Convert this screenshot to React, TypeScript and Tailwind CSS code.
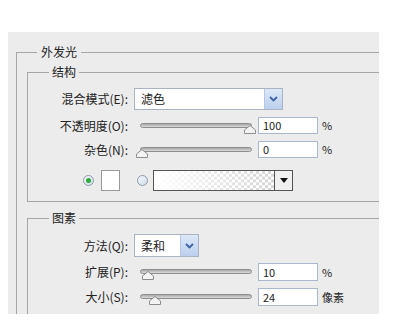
import React from 'react';

const cjk = '"Noto Sans CJK SC", "Liberation Sans", sans-serif';

const Chevron = () => (
  <svg width="9" height="6" viewBox="0 0 9 6">
    <path d="M1 1 L4.5 4.5 L8 1" fill="none" stroke="#3f63a8" strokeWidth="1.8" />
  </svg>
);

const Select = ({ value, width }: { value: string; width: string }) => (
  <div className={`flex h-full ${width} border border-[#a9b3c2] bg-white`}>
    <div className="flex flex-1 items-center pl-[6px] text-[12px] text-[#222]">{value}</div>
    <div className="flex w-[18px] items-center justify-center border-l border-[#b8c8e4] bg-gradient-to-b from-[#dde8f8] to-[#bccfee]">
      <Chevron />
    </div>
  </div>
);

const Slider = ({ pos }: { pos: number }) => (
  <div className="relative ml-[10px] h-full w-[112px]">
    <div className="absolute left-0 right-0 top-1/2 h-[5px] -translate-y-[3px] rounded-full border border-[#8e8e8e] bg-gradient-to-b from-[#a8a8a8] to-[#dcdcdc]" />
    <svg
      className="absolute top-[8px]"
      style={{ left: pos - 6 }}
      width="12"
      height="9"
      viewBox="0 0 12 9"
    >
      <path d="M6 0.5 L11.5 5 L11.5 8.5 L0.5 8.5 L0.5 5 Z" fill="#f4f4f4" stroke="#8c8c8c" />
    </svg>
  </div>
);

const NumInput = ({ value }: { value: string }) => (
  <div className="ml-auto flex h-full w-[60px] items-center border border-[#a9b8cc] bg-white pl-[4px] text-[11px] text-[#222]">
    {value}
  </div>
);

const Label = ({ text }: { text: string }) => (
  <div className="w-[102px] shrink-0 pr-[2px] text-right text-[12px] text-[#222]">{text}</div>
);

const Radio = ({ checked }: { checked?: boolean }) => (
  <div className="flex h-[11px] w-[11px] items-center justify-center rounded-full border border-[#8e9aa8] bg-gradient-to-br from-[#f6fafe] to-[#cfdbe8]">
    {checked && <div className="h-[5px] w-[5px] rounded-full bg-[#2fa83a]" />}
  </div>
);

const Gradient = () => (
  <div className="flex h-full w-[140px] border border-[#555]">
    <svg className="flex-1" height="100%" preserveAspectRatio="none" viewBox="0 0 120 20">
      <defs>
        <pattern id="chk" width="6" height="6" patternUnits="userSpaceOnUse">
          <rect width="6" height="6" fill="#fff" />
          <rect width="3" height="3" fill="#d4d4d4" />
          <rect x="3" y="3" width="3" height="3" fill="#d4d4d4" />
        </pattern>
        <linearGradient id="fade" x1="0" x2="1" y1="0" y2="0">
          <stop offset="0" stopColor="#fff" stopOpacity="1" />
          <stop offset="1" stopColor="#fff" stopOpacity="0" />
        </linearGradient>
      </defs>
      <rect width="120" height="20" fill="url(#chk)" />
      <rect width="120" height="20" fill="url(#fade)" />
    </svg>
    <div className="flex w-[18px] items-center justify-center border-l border-[#555] bg-[#f0f0f0]">
      <svg width="8" height="5" viewBox="0 0 8 5">
        <path d="M0 0 L8 0 L4 5 Z" fill="#111" />
      </svg>
    </div>
  </div>
);

const SliderRow = ({
  label,
  pos,
  value,
  unit,
  h,
  mt,
}: {
  label: string;
  pos: number;
  value: string;
  unit: string;
  h: string;
  mt: string;
}) => (
  <div className={`flex ${h} ${mt} items-center`}>
    <div className="flex h-full w-[290px] items-center">
      <Label text={label} />
      <Slider pos={pos} />
      <NumInput value={value} />
    </div>
    <div className="ml-[4px] text-[11px] text-[#222]">{unit}</div>
  </div>
);

export default function App() {
  return (
    <div className="h-[329px] w-[399px] bg-white pt-[32px] pl-[8px]" style={{ fontFamily: cjk }}>
      <div className="h-[282px] w-[371px] overflow-hidden bg-[#ececec] pt-[13px] pl-[8px]">
        <fieldset className="border-l border-t border-[#a6a6a6] pb-[40px]">
          <legend className="ml-[20px] px-[4px] text-[12px] leading-[14px] text-[#222]">外发光</legend>

          <fieldset className="ml-[10px] mt-[6px] border-b border-l border-t border-[#a6a6a6] pb-[10px]">
            <legend className="ml-[21px] px-[3px] text-[12px] leading-[14px] text-[#222]">结构</legend>

            <div className="mt-[9px] flex h-[22px] items-center">
              <Label text="混合模式(E):" />
              <div className="ml-[4px] h-full">
                <Select value="滤色" width="w-[149px]" />
              </div>
            </div>

            <SliderRow label="不透明度(O):" pos={110} value="100" unit="%" h="h-[17px]" mt="mt-[7px]" />
            <SliderRow label="杂色(N):" pos={2} value="0" unit="%" h="h-[17px]" mt="mt-[7px]" />

            <div className="mt-[11px] flex h-[22px] items-center">
              <div className="ml-[55px]">
                <Radio checked />
              </div>
              <div className="ml-[7px] h-[21px] w-[19px] border border-[#9a9a9a] bg-white" />
              <div className="ml-[17px]">
                <Radio />
              </div>
              <div className="ml-[5px] h-[21px]">
                <Gradient />
              </div>
            </div>
          </fieldset>

          <fieldset className="ml-[10px] mt-[9px] border-l border-t border-[#a6a6a6] pb-[30px]">
            <legend className="ml-[21px] px-[3px] text-[12px] leading-[14px] text-[#222]">图素</legend>

            <div className="mt-[9px] flex h-[23px] items-center">
              <Label text="方法(Q):" />
              <div className="ml-[4px] h-full">
                <Select value="柔和" width="w-[65px]" />
              </div>
            </div>

            <SliderRow label="扩展(P):" pos={8} value="10" unit="%" h="h-[18px]" mt="mt-[6px]" />
            <SliderRow label="大小(S):" pos={15} value="24" unit="像素" h="h-[18px]" mt="mt-[7px]" />
          </fieldset>
        </fieldset>
      </div>
    </div>
  );
}
